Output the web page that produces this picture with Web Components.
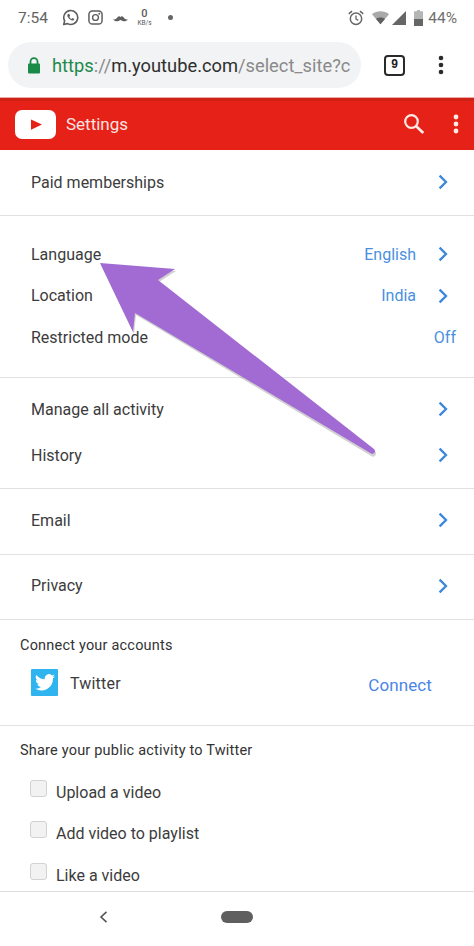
<!DOCTYPE html>
<html><head><meta charset="utf-8">
<style>
html,body{margin:0;padding:0;background:#fff}
body{width:474px;height:946px;overflow:hidden;font-family:Roboto,"Liberation Sans",sans-serif;color:#3a3a3a}
</style></head><body>
<phone-page></phone-page>
<script>
const def=(name,html,setup)=>{customElements.define(name,class extends HTMLElement{
  connectedCallback(){ if(this.shadowRoot) return; const r=this.attachShadow({mode:'open'}); r.innerHTML=typeof html==='function'?html(this):html; setup&&setup(r,this);}
});};
const chev=`<svg width="12" height="16" viewBox="0 0 12 16"><path d="M2.600 1.600 9 8l-6.400 6.400" fill="none" stroke="#3b87dc" stroke-width="2.300"/></svg>`;

def('status-bar',`<style>
:host{display:flex;align-items:center;height:33px;box-sizing:border-box;padding:2px 0 0 18px;color:#636363;font-size:15px;position:relative}
.t{font-size:15.500px;width:44px}
.l{display:flex;align-items:center}
.kb{display:flex;flex-direction:column;align-items:center;line-height:1;margin:0 0 0 8px;width:17px;color:#5a5a5a}
.kb b{font-weight:500;font-size:11px;height:10px}.kb i{font-style:normal;font-size:6.500px;margin-top:2px}
.dot{width:5px;height:5px;border-radius:50%;background:#666;margin-left:15px}
.r{margin-left:auto;display:flex;align-items:center;padding-right:17px}
.p{font-size:15.500px;margin-left:5px;color:#707070}
svg{display:block}
</style>
<span class="t">7:54</span>
<span class="l">
<svg width="17" height="17" viewBox="0 0 18 18"><path d="M1.800 16.400l1-3.800A7.400 7.400 0 1 1 5.700 15.500z" fill="none" stroke="#5f5f5f" stroke-width="1.700" stroke-linejoin="round"/><path d="M6.300 5.200c-1 .9-.9 2.200.2 3.800 1.200 1.800 3 3 4.600 3.200 1 .1 1.800-.7 2-1.600l-2-1-.9.9c-1-.4-1.900-1.300-2.400-2.400l.8-1L7.600 5z" fill="#5f5f5f"/></svg>
<svg width="15" height="15" viewBox="0 0 16 16" style="margin-left:9px"><rect x="1" y="1" width="14" height="14" rx="3.600" fill="none" stroke="#5f5f5f" stroke-width="1.600"/><circle cx="8" cy="8" r="3.100" fill="none" stroke="#5f5f5f" stroke-width="1.500"/><circle cx="12" cy="4" r="1" fill="#5f5f5f"/></svg>
<svg width="15" height="8" viewBox="0 0 15 8" style="margin-left:10px"><path d="M0 5.200C1.500 5.800 3 5.400 4.500 3.200 5.500 1.800 6.700 2 7.500 3 8.300 2 9.500 1.800 10.500 3.200 12 5.400 13.500 5.800 15 5.200 13.500 7.400 11 7.800 9 6.700 8.300 6.300 7.900 6 7.500 6 7.100 6 6.700 6.300 6 6.700 4 7.800 1.500 7.400 0 5.200Z" fill="#5f5f5f"/></svg>
<span class="kb"><b>0</b><i>KB/s</i></span>
<span class="dot"></span>
</span>
<span class="r">
<svg width="16" height="16" viewBox="0 0 16 16"><circle cx="8" cy="8.800" r="5.700" fill="none" stroke="#666" stroke-width="1.500"/><path d="M8 5.600v3.400l2.300 1.400" fill="none" stroke="#666" stroke-width="1.300"/><path d="M.8 3.800 4 1.200M15.200 3.800 12 1.200" stroke="#666" stroke-width="1.600"/></svg>
<svg width="17" height="14" viewBox="0 0 19 15" style="margin-left:8px"><path d="M0 3.200C5.500-1 13.500-1 19 3.200L9.500 14.500z" fill="#a9a9a9"/><path d="M4.500 8.600c3-2.100 7-2.100 10 0l-5 5.900z" fill="#5f5f5f"/></svg>
<svg width="14" height="14" viewBox="0 0 15 15" style="margin-left:3px"><path d="M0 15 15 0v15z" fill="#666"/></svg>
<svg width="9" height="16" viewBox="0 0 9 16" style="margin-left:8px"><path d="M3 0h3v1.300h3V9H0V1.300h3z" fill="#b5b5b5"/><rect y="9" width="9" height="7" fill="#666"/></svg>
<span class="p">44%</span>
</span>`);

def('url-bar',`<style>
:host{display:flex;align-items:center;height:64px;box-sizing:border-box;padding:0 0 0 8px;background:#fff}
.pill{width:353px;height:46px;border-radius:23px;background:#f1f3f4;display:flex;align-items:center;box-sizing:border-box;padding-left:19px;font-size:18.300px;white-space:nowrap}
.u{margin-left:11px;padding-top:1px}
.g{color:#1f8a4c}.h{color:#8a8a8a}.d{color:#2f2f2f}
.tab{box-sizing:border-box;width:21px;height:21px;border:2px solid #2a2a2a;border-radius:4px;margin-left:23px;font:700 12px "Liberation Mono",monospace;display:flex;align-items:center;justify-content:center;color:#222}
.m{margin-left:33px}
svg{display:block;flex:none}
</style>
<div class="pill"><svg width="14" height="17" viewBox="0 0 14 17"><path d="M3.500 7V4.700a3.500 3.500 0 0 1 7 0V7" fill="none" stroke="#1a8a48" stroke-width="1.800"/><rect x="1" y="6.500" width="12" height="10" rx="1" fill="#1a8a48"/></svg>
<div class="u"><span class="g">https</span><span class="h">://</span><span class="d">m.youtube.com</span><span class="h">/select_site?c</span></div></div>
<div class="tab">9</div>
<svg class="m" width="6" height="20" viewBox="0 0 6 20"><circle cx="3" cy="3" r="2.300" fill="#2a2a2a"/><circle cx="3" cy="10" r="2.300" fill="#2a2a2a"/><circle cx="3" cy="17" r="2.300" fill="#2a2a2a"/></svg>`);

def('app-header',`<style>
:host{display:flex;align-items:center;height:53px;box-sizing:border-box;background:#e62117;border-top:1px solid #f0a9a4;box-shadow:inset 0 3px 0 #cf2216;padding-left:15px;color:#fbe3e0;font-size:17px}
.t{margin-left:10px}
.s{margin-left:auto}.m{margin-left:28px;margin-right:15px}
svg{display:block}
</style>
<svg width="41" height="29" viewBox="0 0 41 29"><rect width="41" height="29" rx="7" fill="#fff"/><path d="M16 9.500 27 14.500 16 19.800z" fill="#e62117"/></svg>
<span class="t">Settings</span>
<svg class="s" width="22" height="22" viewBox="0 0 22 22"><circle cx="8.500" cy="8.500" r="6.300" fill="none" stroke="#fde9e6" stroke-width="2.200"/><path d="M13 13l7.300 7" stroke="#fde9e6" stroke-width="2.600"/></svg>
<svg class="m" width="6" height="20" viewBox="0 0 6 20"><circle cx="3" cy="3" r="2.400" fill="#fde9e6"/><circle cx="3" cy="10" r="2.400" fill="#fde9e6"/><circle cx="3" cy="17" r="2.400" fill="#fde9e6"/></svg>`);

def('setting-section',`<style>
:host{display:block;box-sizing:border-box;border-bottom:1px solid #e2e2e2;background:#fff;height:var(--h);padding-top:var(--pt,0);overflow:hidden}
</style><slot></slot>`);

def('setting-row',el=>{const v=el.getAttribute('value'),c=el.hasAttribute('chevron');return `<style>
:host{display:flex;align-items:center;height:var(--rh,64px);padding-left:31px;padding-right:${c?'25px':'18px'};font-size:16px;color:#3c3c3c}
.v{margin-left:auto;color:#4a8fe0}
.c{margin-left:${v?'21px':'auto'};display:flex}
svg{display:block}
</style><span><slot></slot></span>${v?`<span class="v">${v}</span>`:''}${c?`<span class="c">${chev}</span>`:''}`});

def('section-title',`<style>:host{display:block;font-size:14.500px;padding-left:20px;color:#333;letter-spacing:.2px;line-height:18px}</style><slot></slot>`);

def('account-row',`<style>
:host{display:flex;align-items:center;padding-left:31px;padding-right:42px;height:28px;font-size:16px;color:#3c3c3c;letter-spacing:.2px}
.i{width:27px;height:27px;background:#2fb4f0;border-radius:1px;display:flex;align-items:center;justify-content:center;margin-right:12px}
.n{margin-top:3px}
.c{margin-left:auto;color:#4a86e8;font-size:17px;margin-top:5px;letter-spacing:.1px}
svg{display:block}
</style><span class="i"><svg width="20" height="17" viewBox="0 0 24 20"><path d="M24 2.400a9.800 9.800 0 0 1-2.800.8A4.900 4.900 0 0 0 23.300.5a9.800 9.800 0 0 1-3.100 1.200A4.900 4.900 0 0 0 11.800 6.200 13.900 13.900 0 0 1 1.700.9a4.900 4.900 0 0 0 1.500 6.600 4.900 4.900 0 0 1-2.200-.6c0 2.400 1.700 4.400 3.900 4.900a4.900 4.900 0 0 1-2.200.1 4.900 4.900 0 0 0 4.600 3.400A9.900 9.900 0 0 1 0 17.300 13.900 13.900 0 0 0 21.500 5a9.900 9.900 0 0 0 2.500-2.600z" fill="#fff"/></svg></span><span class="n"><slot></slot></span><span class="c">Connect</span>`);

def('check-row',`<style>
:host{display:flex;height:41.300px;padding-left:30px;font-size:16px;color:#3c3c3c}
.b{box-sizing:border-box;width:17px;height:17px;border:1px solid #d2d2d2;border-radius:3px;background:#f2f2f2;margin-right:9px;flex:none}
.t{margin-top:3px;line-height:20px}
</style><span class="b"></span><span class="t"><slot></slot></span>`);

def('nav-bar',`<style>
:host{display:flex;align-items:center;height:55px;box-sizing:border-box;background:#fff;border-top:1px solid #dedede;position:relative;padding:0 0 4px 99px}
.p{width:32px;height:12px;border-radius:6px;background:#5f5f5f;margin-left:113px}
svg{display:block}
</style><svg width="9" height="12" viewBox="0 0 9 12"><path d="M7.500 .8 2 6l5.500 5.200" fill="none" stroke="#555" stroke-width="1.600"/></svg><span class="p"></span>`);

def('callout-arrow',`<style>
:host{position:absolute;left:0;top:0;width:474px;height:946px;pointer-events:none}
svg{display:block}
</style><svg width="474" height="946" viewBox="0 0 474 946">
<path d="M100 263 175 269 158 280 374 449Q377 453 372 455L135 313 133 332Z" fill="#666" opacity=".3" transform="translate(1,2)"/>
<path d="M100 263 175 269 158 280 374 449Q377 453 372 454L135 313 133 332Z" fill="#a26ad3"/></svg>`);

def('phone-page',`<style>
:host{display:block;position:relative;width:474px;height:946px;overflow:hidden;background:#fff}
</style>
<status-bar></status-bar><url-bar></url-bar><app-header></app-header>
<setting-section style="--h:66px"><setting-row chevron>Paid memberships</setting-row></setting-section>
<setting-section style="--h:162px;--pt:17.500px;--rh:41.500px"><setting-row value="English" chevron>Language</setting-row><setting-row value="India" chevron>Location</setting-row><setting-row value="Off">Restricted mode</setting-row></setting-section>
<setting-section style="--h:111px;--pt:8px;--rh:46px"><setting-row chevron>Manage all activity</setting-row><setting-row chevron>History</setting-row></setting-section>
<setting-section style="--h:66px;--rh:62px"><setting-row chevron>Email</setting-row></setting-section>
<setting-section style="--h:65px;--rh:61px"><setting-row chevron>Privacy</setting-row></setting-section>
<setting-section style="--h:106px;--pt:17px"><section-title>Connect your accounts</section-title><account-row style="margin-top:13px">Twitter</account-row></setting-section>
<setting-section style="--h:165px;--pt:16px;border-bottom:0"><section-title>Share your public activity to Twitter</section-title><div style="height:20px"></div><check-row>Upload a video</check-row><check-row>Add video to playlist</check-row><check-row>Like a video</check-row></setting-section>
<nav-bar></nav-bar>
<callout-arrow></callout-arrow>`);
</script></body></html>
